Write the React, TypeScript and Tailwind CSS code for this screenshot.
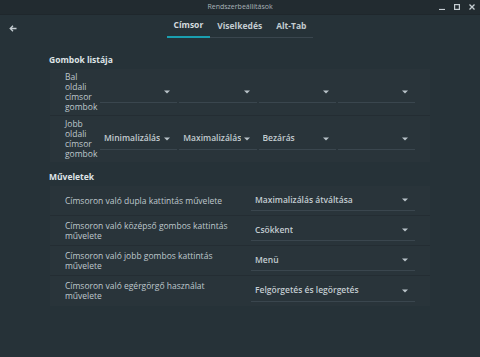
import React from "react";

const font = { fontFamily: '"Open Sans", "Noto Sans", sans-serif' };

function Arrow() {
  return (
    <svg width="6" height="4" viewBox="0 0 6 4" className="shrink-0">
      <path d="M0 0.5h6L3 3.5z" fill="#b9c3c9" />
    </svg>
  );
}

function Combo({ value, className }: { value?: string; className?: string }) {
  return (
    <div
      className={`flex h-[21px] items-center justify-between border-b border-[#3a464e] pl-[4px] pr-[7px] ${className ?? ""}`}>
      <span className="text-[8.5px] font-semibold text-[#c3ccd1] truncate">
        {value ?? ""}
      </span>
      <Arrow />
    </div>
  );
}

const actions = [
  ["Címsoron való dupla kattintás művelete", "Maximalizálás átváltása"],
  ["Címsoron való középső gombos kattintás művelete", "Csökkent"],
  ["Címsoron való jobb gombos kattintás művelete", "Menü"],
  ["Címsoron való egérgörgő használat művelete", "Felgörgetés és legörgetés"],
];

export default function App() {
  return (
    <div
      className="w-[480px] h-[357px] bg-[#263238] text-[#bfc8cd] overflow-hidden"
      style={font}>
      {/* Title bar */}
      <div className="relative flex h-[15px] items-center justify-center bg-[#222b30] border-b border-[#1f272c]">
        <span className="text-[7px] text-[#aab4ba]">Rendszerbeállítások</span>
        <div className="absolute right-[5px] top-0 flex h-full items-center gap-[9px]">
          <svg width="6" height="6" viewBox="0 0 6 6">
            <path d="M0 5.5h6" stroke="#c6ced3" strokeWidth="1.2" />
          </svg>
          <svg width="6" height="6" viewBox="0 0 6 6">
            <rect x="0.6" y="0.6" width="4.8" height="4.8" fill="none" stroke="#c6ced3" strokeWidth="1.2" />
          </svg>
          <svg width="6" height="6" viewBox="0 0 6 6">
            <path d="M0.5 0.5l5 5M5.5 0.5l-5 5" stroke="#c6ced3" strokeWidth="1.3" />
          </svg>
        </div>
      </div>

      {/* Header with tabs */}
      <div className="relative flex h-[23px] justify-center">
        <svg
          className="absolute left-[9px] top-[10px]"
          width="8"
          height="7"
          viewBox="0 0 8 7">
          <path d="M7.5 3.5H1.5M4 0.8L1.2 3.5 4 6.2" fill="none" stroke="#c6ced3" strokeWidth="1.3" />
        </svg>
        <div className="flex items-stretch border-b border-[#3a464e]">
          <div className="flex items-center px-[7px] text-[8.5px] font-bold text-[#d5dbdf] border-b-2 border-[#1a9fb0] -mb-px">
            Címsor
          </div>
          <div className="flex items-center px-[7px] text-[8.5px] font-bold text-[#c3ccd1]">
            Viselkedés
          </div>
          <div className="flex items-center px-[7px] text-[8.5px] font-bold text-[#c3ccd1]">
            Alt-Tab
          </div>
        </div>
      </div>

      {/* Content */}
      <div className="pl-[49px] pr-[50px] pt-[17px]">
        <h3 className="text-[8.5px] font-bold text-[#dfe4e7] leading-[10px]">
          Gombok listája
        </h3>
        <div className="mt-[4px] ml-px bg-[#29343a] divide-y divide-[#242d33]">
          <div className="flex items-center px-[15px] py-[3px]">
            <div className="w-[35px] text-[8.5px] leading-[10px]">
              Bal
              <br />
              oldali
              <br />
              címsor
              <br />
              gombok
            </div>
            <div className="flex flex-1 gap-[2px]">
              <Combo className="flex-1" />
              <Combo className="flex-1" />
              <Combo className="flex-1" />
              <Combo className="flex-1" />
            </div>
          </div>
          <div className="flex items-center px-[15px] py-[3px]">
            <div className="w-[35px] text-[8.5px] leading-[10px]">
              Jobb
              <br />
              oldali
              <br />
              címsor
              <br />
              gombok
            </div>
            <div className="flex flex-1 gap-[2px]">
              <Combo className="flex-1" value="Minimalizálás" />
              <Combo className="flex-1" value="Maximalizálás" />
              <Combo className="flex-1" value="Bezárás" />
              <Combo className="flex-1" />
            </div>
          </div>
        </div>

        <h3 className="mt-[10px] text-[8.5px] font-bold text-[#dfe4e7] leading-[10px]">
          Műveletek
        </h3>
        <div className="mt-[4px] ml-px bg-[#29343a] divide-y divide-[#242d33]">
          {actions.map(([label, value]) => (
            <div key={label} className="flex h-[30px] items-center px-[15px]">
              <div className="flex-1 pr-[20px] text-[8.5px] leading-[10px]">
                {label}
              </div>
              <Combo className="w-[164px]" value={value} />
            </div>
          ))}
        </div>
      </div>
    </div>
  );
}
